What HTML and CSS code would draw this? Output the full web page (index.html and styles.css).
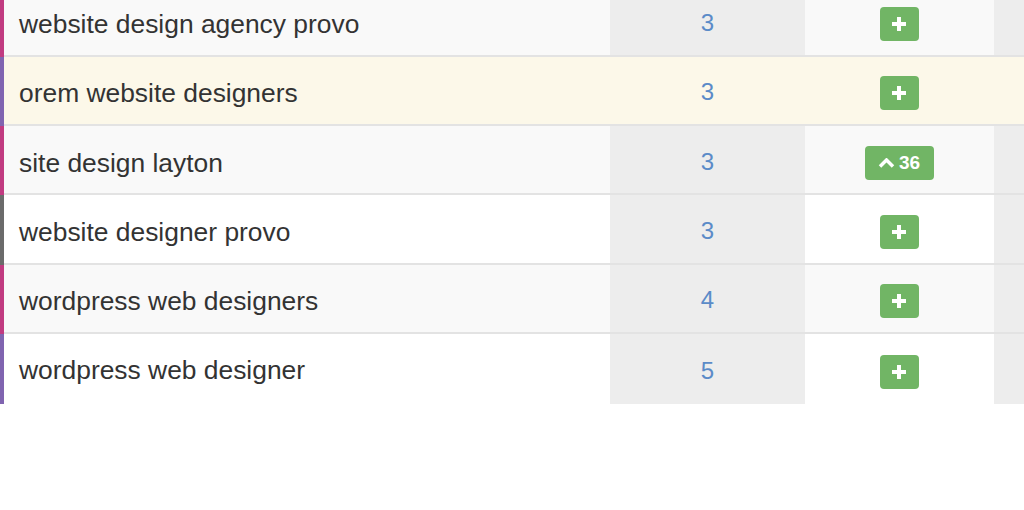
FILE: index.html
```html
<!DOCTYPE html>
<html>
<head>
<meta charset="utf-8">
<link rel="stylesheet" href="styles.css">
</head>
<body>
<div class="viewport">
  <div class="table">
    <div class="row striped">
      <div class="kw mark-magenta">website design agency provo</div>
      <div class="num">3</div>
      <div class="act"><span class="btn"><svg class="plus" viewBox="0 0 16 16"><path d="M8 1v14M1 8h14"/></svg></span></div>
      <div class="extra"></div>
    </div>
    <div class="row warn">
      <div class="kw mark-purple">orem website designers</div>
      <div class="num">3</div>
      <div class="act"><span class="btn"><svg class="plus" viewBox="0 0 16 16"><path d="M8 1v14M1 8h14"/></svg></span></div>
      <div class="extra"></div>
    </div>
    <div class="row striped">
      <div class="kw mark-magenta">site design layton</div>
      <div class="num">3</div>
      <div class="act"><span class="btn badge"><svg class="chev" viewBox="0 0 17 10"><path d="M2 8.5l6.5-6.5 6.5 6.5"/></svg><span>36</span></span></div>
      <div class="extra"></div>
    </div>
    <div class="row">
      <div class="kw mark-gray">website designer provo</div>
      <div class="num">3</div>
      <div class="act"><span class="btn"><svg class="plus" viewBox="0 0 16 16"><path d="M8 1v14M1 8h14"/></svg></span></div>
      <div class="extra"></div>
    </div>
    <div class="row striped">
      <div class="kw mark-magenta">wordpress web designers</div>
      <div class="num">4</div>
      <div class="act"><span class="btn"><svg class="plus" viewBox="0 0 16 16"><path d="M8 1v14M1 8h14"/></svg></span></div>
      <div class="extra"></div>
    </div>
    <div class="row last">
      <div class="kw mark-purple">wordpress web designer</div>
      <div class="num">5</div>
      <div class="act"><span class="btn"><svg class="plus" viewBox="0 0 16 16"><path d="M8 1v14M1 8h14"/></svg></span></div>
      <div class="extra"></div>
    </div>
  </div>
</div>
</body>
</html>
```
FILE: styles.css
```css
html, body {
  margin: 0;
  padding: 0;
  background: #ffffff;
}
.viewport {
  width: 1024px;
  height: 510px;
  overflow: hidden;
}
.table {
  margin-top: -12.8px;
  width: 1060px;
  font-family: "Liberation Sans", Arial, sans-serif;
}
.row {
  display: grid;
  grid-template-columns: 610px 195px 189px 66px;
  height: 69.4px;
  box-sizing: border-box;
  border-bottom: 2px solid #e3e3e3;
  background: #ffffff;
}
.row.last {
  border-bottom: 0;
}
.row.striped {
  background: #f9f9f9;
}
.row.warn {
  background: #fcf8e9;
}
.kw {
  display: flex;
  align-items: center;
  padding-left: 15px;
  padding-top: 5px;
  border-left: 4px solid #c13b81;
  font-size: 26.4px;
  color: #333333;
  margin-bottom: -2px;
}
.row.last .kw {
  margin-bottom: 0;
  padding-top: 3px;
}
.mark-magenta { border-left-color: #c13b81; }
.mark-purple { border-left-color: #8064b0; }
.mark-gray { border-left-color: #6b6b6b; }
.num {
  display: flex;
  align-items: center;
  justify-content: center;
  padding-top: 4px;
  background: #ededed;
  font-size: 24px;
  color: #5b8bc8;
}
.row.warn .num,
.row.warn .extra {
  background: transparent;
}
.act {
  display: flex;
  align-items: center;
  justify-content: center;
  padding-right: 1px;
  padding-top: 6px;
}
.extra {
  background: #ededed;
}
.btn {
  display: inline-flex;
  align-items: center;
  justify-content: center;
  width: 39px;
  height: 34px;
  border-radius: 4px;
  background: #71b565;
}
.plus {
  width: 16px;
  height: 16px;
  fill: none;
  stroke: #ffffff;
  stroke-width: 4;
}
.badge {
  width: 69px;
  height: 34px;
  gap: 4px;
  color: #ffffff;
  font-weight: bold;
  font-size: 19px;
}
.chev {
  width: 17px;
  height: 10px;
  fill: none;
  stroke: #ffffff;
  stroke-width: 3.5;
}
```
